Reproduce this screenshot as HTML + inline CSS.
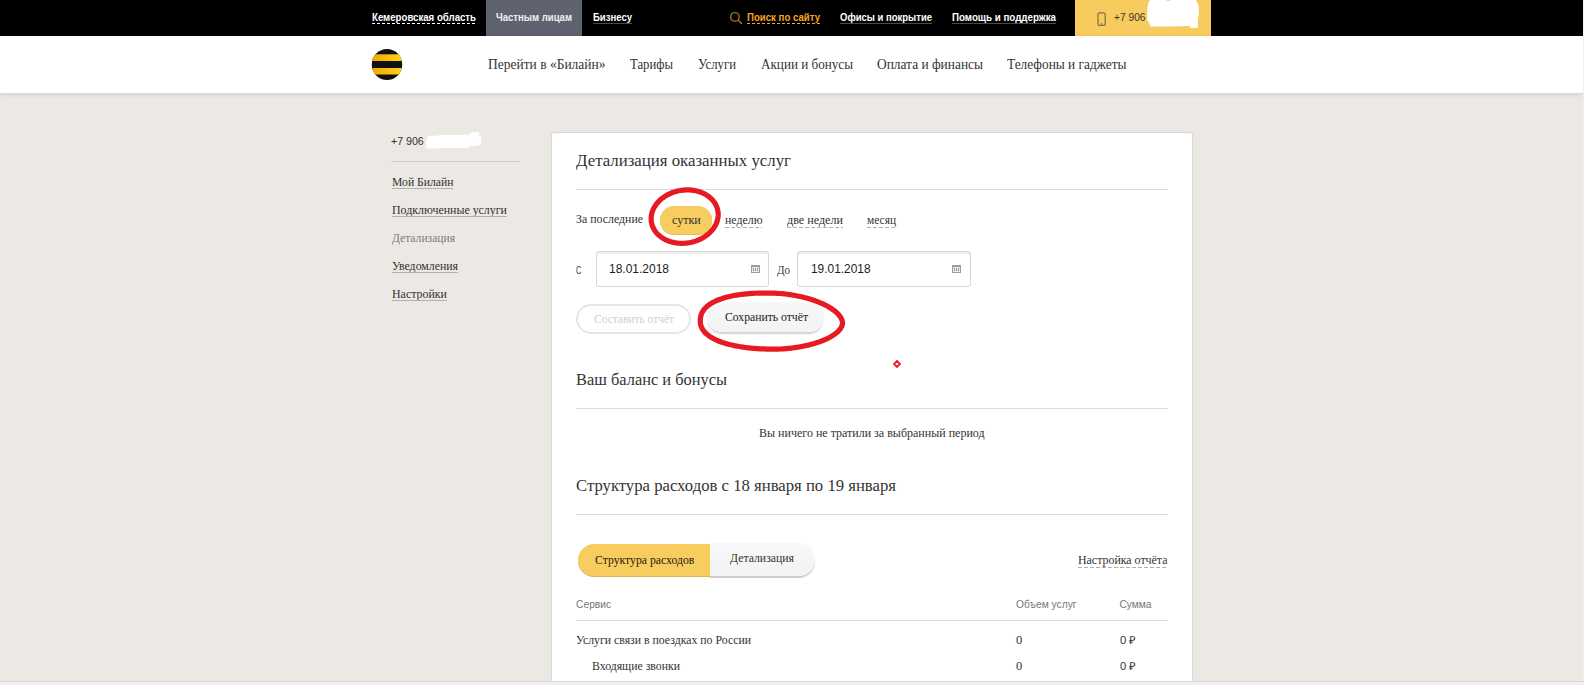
<!DOCTYPE html>
<html><head><meta charset="utf-8">
<style>
html,body{margin:0;padding:0;width:1584px;height:685px;overflow:hidden;background:#ece9e4;}
body{position:relative;font-family:"Liberation Serif",serif;color:#282828;}
.a{position:absolute;white-space:nowrap;line-height:1;transform-origin:0 0;}
.sf{}
.b{position:absolute;}
.ul{position:absolute;height:1px;}
.dash-w{background-image:linear-gradient(to right,#ffffff 3px,transparent 3px);background-size:5px 1px;}
.dash-o{background-image:linear-gradient(to right,#f5a623 3px,transparent 3px);background-size:5px 1px;}
.dash-g{background-image:linear-gradient(to right,#b0b0b0 4px,transparent 4px);background-size:6px 1px;}
.uline-d{background:#4a4a4a;}
.uline-s{background:#b3b0aa;}
.hr{position:absolute;height:1px;background:#dadada;}
.inp{position:absolute;height:34px;border:1px solid #d6d6d6;border-radius:3px;background:#fff;box-shadow:inset 0 2px 1px rgba(0,0,0,0.07);}
</style></head><body>
<!-- top bar -->
<div class="b" style="left:0;top:0;width:1583px;height:36px;background:#000;"></div>
<div class="b" style="left:486px;top:0;width:96px;height:36px;background:#5f6370;"></div>
<svg class="b" style="left:729px;top:11px" width="15" height="15" viewBox="0 0 15 15"><circle cx="5.9" cy="5.9" r="4.3" fill="none" stroke="#93701a" stroke-width="1.4"/><line x1="8.9" y1="8.9" x2="13" y2="13" stroke="#d18c16" stroke-width="1.1"/></svg>
<div class="b" style="left:1075px;top:0;width:136px;height:36px;background:#f8cb5e;"></div>
<svg class="b" style="left:1097px;top:12px" width="10" height="15" viewBox="0 0 10 15"><rect x="1" y="0.8" width="7.2" height="12.6" rx="1.4" fill="none" stroke="#7d7048" stroke-width="1.2"/><line x1="4.6" y1="10.8" x2="4.6" y2="12.8" stroke="#7d7048" stroke-width="1"/></svg>
<svg class="b" style="left:1100px;top:0" width="110" height="36" viewBox="0 0 110 36"><path d="M50.0 0.0 L66.6 0.0 L66.6 0.8 L70.4 0.8 L70.4 0.0 L96.0 0.0 L98.8 5.7 L98.8 14.2 L97.8 18.9 L97.8 27.9 L90.3 27.9 L89.8 26.0 L69.4 26.5 L50.5 26.5 L48.6 21.8 L47.2 20.4 L47.2 9.5 L48.6 1.9 Z" fill="#fff"/></svg>
<!-- header -->
<div class="b" style="left:0;top:36px;width:1583px;height:57px;background:#fff;box-shadow:0 1px 5px rgba(0,0,0,0.13);"></div>
<svg class="b" style="left:371px;top:48px" width="32" height="33" viewBox="0 0 32 33">
<defs><clipPath id="cc"><ellipse cx="16" cy="16.5" rx="15.2" ry="15.5"/></clipPath>
<linearGradient id="yg" x1="0" x2="1" y1="0" y2="0"><stop offset="0" stop-color="#f2a600"/><stop offset="1" stop-color="#ffd41c"/></linearGradient></defs>
<g clip-path="url(#cc)"><rect x="0" y="0" width="32" height="33" fill="#111"/>
<rect x="0" y="6.3" width="32" height="6.7" fill="url(#yg)"/>
<rect x="0" y="20" width="32" height="6.5" fill="url(#yg)"/></g></svg>
<!-- sidebar -->
<svg class="b" style="left:0;top:0" width="600" height="200" viewBox="0 0 600 200"><path d="M427.9 135.9 L438.8 135.7 L439 134.9 L469 134.7 L469.2 134 L471 133.2 L471 132.2 L479.2 132.2 L479.2 135.5 L481 137.2 L481 144.9 L478.1 144.9 L478.1 145.9 L469 145.9 L469 148 L438.1 148 L438.1 148.6 L426.3 148.6 L426.3 140.9 Z" fill="#fff"/></svg>
<div class="hr" style="left:391px;top:161px;width:129px;background:#d2cfca;"></div>
<!-- card -->
<div class="b" style="left:551px;top:132px;width:640px;height:600px;background:#fff;border:1px solid #d6d6d6;border-radius:3px;"></div>
<div class="hr" style="left:576px;top:189px;width:592px;"></div>
<div class="b" style="left:660px;top:206px;width:52px;height:28px;border-radius:14px;background:#f8cd5f;box-shadow:0 1px 0 #e8b955;"></div>
<div class="inp" style="left:596px;top:251px;width:171px;"></div>
<svg class="b" style="left:751px;top:265px" width="10" height="9" viewBox="0 0 10 9"><rect x="0" y="0" width="9" height="8" fill="#9c9c9c"/><rect x="1" y="2" width="7" height="5" fill="#e9e9e9"/><g fill="#9c9c9c"><rect x="2" y="3" width="1" height="3"/><rect x="4" y="3" width="1" height="3"/><rect x="6" y="3" width="1" height="3"/></g></svg>
<div class="inp" style="left:797px;top:251px;width:172px;"></div>
<svg class="b" style="left:952px;top:265px" width="10" height="9" viewBox="0 0 10 9"><rect x="0" y="0" width="9" height="8" fill="#9c9c9c"/><rect x="1" y="2" width="7" height="5" fill="#e9e9e9"/><g fill="#9c9c9c"><rect x="2" y="3" width="1" height="3"/><rect x="4" y="3" width="1" height="3"/><rect x="6" y="3" width="1" height="3"/></g></svg>
<div class="b" style="left:576px;top:304px;width:111px;height:26px;border:2px solid #e6e6e6;border-radius:15px;"></div>
<div class="b" style="left:707px;top:302px;width:117px;height:30px;border-radius:15px;background:linear-gradient(#f7f7f7,#f4f4f4);box-shadow:0 3px 2px -1px rgba(0,0,0,0.18);"></div>
<div class="hr" style="left:576px;top:408px;width:592px;"></div>
<div class="hr" style="left:576px;top:514px;width:592px;"></div>
<div class="b" style="left:710px;top:543px;width:105px;height:33px;border-radius:0 17px 17px 0;background:linear-gradient(#f8f8f8,#f3f3f3);box-shadow:0 2px 1px rgba(0,0,0,0.2);"></div>
<div class="b" style="left:578px;top:544px;width:132px;height:32px;border-radius:16px 0 0 16px;background:#f8cd5f;box-shadow:0 1px 0 #e4ac58;"></div>
<div class="hr" style="left:576px;top:620px;width:592px;"></div>
<div class="a" style="left:372px;top:13px;font-family:'Liberation Sans',sans-serif;font-weight:bold;font-size:10.0px;color:#fff;transform:scaleX(0.9638);">Кемеровская область</div>
<div class="ul dash-w" style="left:372px;top:23px;width:104px;"></div>
<div class="a" style="left:496px;top:13px;font-family:'Liberation Sans',sans-serif;font-weight:bold;font-size:10.0px;color:#f0f0f0;transform:scaleX(0.9556);">Частным лицам</div>
<div class="a" style="left:593px;top:13px;font-family:'Liberation Sans',sans-serif;font-weight:bold;font-size:10.0px;color:#fff;transform:scaleX(0.9534);">Бизнесу</div>
<div class="ul uline-d" style="left:593px;top:23px;width:39px;"></div>
<div class="a" style="left:747px;top:13px;font-family:'Liberation Sans',sans-serif;font-weight:bold;font-size:10.0px;color:#f5a623;transform:scaleX(0.9627);">Поиск по сайту</div>
<div class="ul dash-o" style="left:747px;top:23px;width:73px;"></div>
<div class="a" style="left:840px;top:13px;font-family:'Liberation Sans',sans-serif;font-weight:bold;font-size:10.0px;color:#fff;transform:scaleX(0.9495);">Офисы и покрытие</div>
<div class="ul uline-d" style="left:840px;top:23px;width:92px;"></div>
<div class="a" style="left:952px;top:13px;font-family:'Liberation Sans',sans-serif;font-weight:bold;font-size:10.0px;color:#fff;transform:scaleX(0.9744);">Помощь и поддержка</div>
<div class="ul uline-d" style="left:952px;top:23px;width:104px;"></div>
<div class="a" style="left:1113.6px;top:12px;font-family:'Liberation Sans',sans-serif;font-weight:normal;font-size:11px;color:#3a3426;transform:scaleX(0.9277);">+7 906</div>
<div class="a sf" style="left:488px;top:57px;font-family:'Liberation Serif',serif;font-weight:normal;font-size:15px;color:#333;transform:scaleX(0.8991);">Перейти в «Билайн»</div>
<div class="a sf" style="left:630px;top:57px;font-family:'Liberation Serif',serif;font-weight:normal;font-size:15px;color:#333;transform:scaleX(0.8468);">Тарифы</div>
<div class="a sf" style="left:698px;top:57px;font-family:'Liberation Serif',serif;font-weight:normal;font-size:15px;color:#333;transform:scaleX(0.8509);">Услуги</div>
<div class="a sf" style="left:761px;top:57px;font-family:'Liberation Serif',serif;font-weight:normal;font-size:15px;color:#333;transform:scaleX(0.8751);">Акции и бонусы</div>
<div class="a sf" style="left:877px;top:57px;font-family:'Liberation Serif',serif;font-weight:normal;font-size:15px;color:#333;transform:scaleX(0.8927);">Оплата и финансы</div>
<div class="a sf" style="left:1007px;top:57px;font-family:'Liberation Serif',serif;font-weight:normal;font-size:15px;color:#333;transform:scaleX(0.8896);">Телефоны и гаджеты</div>
<div class="a" style="left:391.3px;top:136px;font-family:'Liberation Sans',sans-serif;font-weight:normal;font-size:11px;color:#333;transform:scaleX(0.9631);">+7 906</div>
<div class="a sf" style="left:391.5px;top:176px;font-family:'Liberation Serif',serif;font-weight:normal;font-size:12.5px;color:#333;transform:scaleX(0.9331);">Мой Билайн</div>
<div class="ul uline-s" style="left:391.5px;top:188px;width:61.5px;"></div>
<div class="a sf" style="left:391.5px;top:204px;font-family:'Liberation Serif',serif;font-weight:normal;font-size:12.5px;color:#333;transform:scaleX(0.9516);">Подключенные услуги</div>
<div class="ul uline-s" style="left:391.5px;top:216px;width:115px;"></div>
<div class="a sf" style="left:391.5px;top:232px;font-family:'Liberation Serif',serif;font-weight:normal;font-size:12.5px;color:#7b7b7b;transform:scaleX(0.9258);">Детализация</div>
<div class="a sf" style="left:391.5px;top:260px;font-family:'Liberation Serif',serif;font-weight:normal;font-size:12.5px;color:#333;transform:scaleX(0.9448);">Уведомления</div>
<div class="ul uline-s" style="left:391.5px;top:272px;width:66px;"></div>
<div class="a sf" style="left:391.5px;top:288px;font-family:'Liberation Serif',serif;font-weight:normal;font-size:12.5px;color:#333;transform:scaleX(0.9532);">Настройки</div>
<div class="ul uline-s" style="left:391.5px;top:300px;width:55px;"></div>
<div class="a sf" style="left:576px;top:152px;font-family:'Liberation Serif',serif;font-weight:normal;font-size:17.7px;color:#333;transform:scaleX(0.9502);">Детализация оказанных услуг</div>
<div class="a sf" style="left:576px;top:213px;font-family:'Liberation Serif',serif;font-weight:normal;font-size:12.5px;color:#333;transform:scaleX(0.9483);">За последние</div>
<div class="a sf" style="left:671.8px;top:214px;font-family:'Liberation Serif',serif;font-weight:normal;font-size:12.5px;color:#333;transform:scaleX(0.9612);">сутки</div>
<div class="a sf" style="left:724.8px;top:214px;font-family:'Liberation Serif',serif;font-weight:normal;font-size:12.5px;color:#333;transform:scaleX(0.9479);">неделю</div>
<div class="ul dash-g" style="left:724.8px;top:227px;width:37.5px;"></div>
<div class="a sf" style="left:786.7px;top:214px;font-family:'Liberation Serif',serif;font-weight:normal;font-size:12.5px;color:#333;transform:scaleX(0.9692);">две недели</div>
<div class="ul dash-g" style="left:786.7px;top:227px;width:56px;"></div>
<div class="a sf" style="left:867px;top:214px;font-family:'Liberation Serif',serif;font-weight:normal;font-size:12.5px;color:#333;transform:scaleX(0.9129);">месяц</div>
<div class="ul dash-g" style="left:867px;top:227px;width:29px;"></div>
<div class="a" style="left:576px;top:265px;font-family:'Liberation Sans',sans-serif;font-weight:normal;font-size:11px;color:#333;transform:scaleX(0.6538);">С</div>
<div class="a" style="left:609px;top:263px;font-family:'Liberation Sans',sans-serif;font-weight:normal;font-size:12.2px;color:#1e1e1e;transform:scaleX(0.9836);">18.01.2018</div>
<div class="a sf" style="left:777px;top:264px;font-family:'Liberation Serif',serif;font-weight:normal;font-size:12.5px;color:#333;transform:scaleX(0.8795);">До</div>
<div class="a" style="left:811px;top:263px;font-family:'Liberation Sans',sans-serif;font-weight:normal;font-size:12.2px;color:#1e1e1e;transform:scaleX(0.9754);">19.01.2018</div>
<div class="a sf" style="left:593.5px;top:313px;font-family:'Liberation Serif',serif;font-weight:normal;font-size:12.5px;color:#cfcfcf;transform:scaleX(0.9159);">Составить отчёт</div>
<div class="a sf" style="left:724.5px;top:311px;font-family:'Liberation Serif',serif;font-weight:normal;font-size:12.5px;color:#1a1a1a;transform:scaleX(0.9342);">Сохранить отчёт</div>
<div class="a sf" style="left:576px;top:371px;font-family:'Liberation Serif',serif;font-weight:normal;font-size:17.7px;color:#333;transform:scaleX(0.9270);">Ваш баланс и бонусы</div>
<div class="a sf" style="left:758.8px;top:427px;font-family:'Liberation Serif',serif;font-weight:normal;font-size:12.5px;color:#333;transform:scaleX(0.9599);">Вы ничего не тратили за выбранный период</div>
<div class="a sf" style="left:576px;top:477px;font-family:'Liberation Serif',serif;font-weight:normal;font-size:17.7px;color:#333;transform:scaleX(0.9440);">Структура расходов с 18 января по 19 января</div>
<div class="a sf" style="left:594.9px;top:554px;font-family:'Liberation Serif',serif;font-weight:normal;font-size:12.5px;color:#262010;transform:scaleX(0.9380);">Структура расходов</div>
<div class="a sf" style="left:730.3px;top:552px;font-family:'Liberation Serif',serif;font-weight:normal;font-size:12.5px;color:#333;transform:scaleX(0.9405);">Детализация</div>
<div class="a sf" style="left:1078px;top:554px;font-family:'Liberation Serif',serif;font-weight:normal;font-size:12.5px;color:#333;transform:scaleX(0.9518);">Настройка отчёта</div>
<div class="ul dash-g" style="left:1078px;top:567px;width:89.5px;"></div>
<div class="a" style="left:575.8px;top:600px;font-family:'Liberation Sans',sans-serif;font-weight:normal;font-size:10.2px;color:#777;transform:scaleX(1.0089);">Сервис</div>
<div class="a" style="left:1016px;top:600px;font-family:'Liberation Sans',sans-serif;font-weight:normal;font-size:10.2px;color:#777;transform:scaleX(1.0079);">Объем услуг</div>
<div class="a" style="left:1119.5px;top:600px;font-family:'Liberation Sans',sans-serif;font-weight:normal;font-size:10.2px;color:#777;">Сумма</div>
<div class="a sf" style="left:576px;top:634px;font-family:'Liberation Serif',serif;font-weight:normal;font-size:12.5px;color:#333;transform:scaleX(0.9431);">Услуги связи в поездках по России</div>
<div class="a sf" style="left:1016px;top:634px;font-family:'Liberation Serif',serif;font-weight:normal;font-size:12.5px;color:#333;">0</div>
<div class="a" style="left:1119.5px;top:635px;font-family:'Liberation Sans',sans-serif;font-weight:normal;font-size:11px;color:#333;transform:scaleX(1.0206);">0 ₽</div>
<div class="a sf" style="left:592px;top:660px;font-family:'Liberation Serif',serif;font-weight:normal;font-size:12.5px;color:#333;transform:scaleX(0.9423);">Входящие звонки</div>
<div class="a sf" style="left:1016px;top:660px;font-family:'Liberation Serif',serif;font-weight:normal;font-size:12.5px;color:#333;">0</div>
<div class="a" style="left:1119.5px;top:661px;font-family:'Liberation Sans',sans-serif;font-weight:normal;font-size:11px;color:#333;transform:scaleX(1.0206);">0 ₽</div>
<!-- annotations -->
<svg class="b" style="left:0;top:0" width="1584" height="685" viewBox="0 0 1584 685"><path d="M717.89,210.97 L718.03,212.00 L718.13,213.04 L718.18,214.08 L718.17,215.13 L718.11,216.17 L718.00,217.22 L717.84,218.27 L717.63,219.32 L717.36,220.36 L717.05,221.39 L716.69,222.42 L716.27,223.44 L715.81,224.45 L715.30,225.44 L714.75,226.42 L714.14,227.39 L713.49,228.34 L712.80,229.27 L712.06,230.19 L711.28,231.08 L710.46,231.95 L709.60,232.79 L708.71,233.62 L707.77,234.41 L706.80,235.18 L705.79,235.92 L704.76,236.63 L703.69,237.30 L702.59,237.95 L701.46,238.56 L700.31,239.14 L699.14,239.69 L697.94,240.20 L696.72,240.67 L695.48,241.11 L694.23,241.50 L692.96,241.86 L691.68,242.18 L690.39,242.47 L689.09,242.71 L687.78,242.91 L686.47,243.07 L685.15,243.19 L683.83,243.27 L682.52,243.31 L681.21,243.30 L679.90,243.26 L678.60,243.17 L677.31,243.04 L676.03,242.88 L674.77,242.67 L673.52,242.42 L672.29,242.13 L671.07,241.81 L669.88,241.44 L668.71,241.04 L667.57,240.59 L666.45,240.11 L665.36,239.60 L664.30,239.05 L663.27,238.46 L662.27,237.84 L661.31,237.19 L660.38,236.51 L659.49,235.79 L658.64,235.05 L657.83,234.28 L657.07,233.48 L656.34,232.65 L655.66,231.80 L655.02,230.93 L654.43,230.03 L653.88,229.12 L653.39,228.18 L652.94,227.23 L652.54,226.26 L652.18,225.27 L651.88,224.28 L651.63,223.27 L651.43,222.25 L651.29,221.22 L651.19,220.18 L651.14,219.14 L651.15,218.09 L651.21,217.05 L651.32,216.00 L651.48,214.95 L651.69,213.90 L651.96,212.86 L652.27,211.83 L652.63,210.80 L653.05,209.78 L653.51,208.77 L654.02,207.78 L654.57,206.80 L655.18,205.83 L655.83,204.88 L656.52,203.95 L657.26,203.03 L658.04,202.14 L658.86,201.27 L659.72,200.43 L660.61,199.60 L661.55,198.81 L662.52,198.04 L663.53,197.30 L664.56,196.59 L665.63,195.92 L666.73,195.27 L667.86,194.66 L669.01,194.08 L670.18,193.53 L671.38,193.02 L672.60,192.55 L673.84,192.11 L675.09,191.72 L676.36,191.36 L677.64,191.04 L678.93,190.75 L680.23,190.51 L681.54,190.31 L682.85,190.15 L684.17,190.03 L685.49,189.95 L686.80,189.91 L688.11,189.92 L689.42,189.96 L690.72,190.05 L692.01,190.18 L693.29,190.34 L694.55,190.55 L695.80,190.80 L697.03,191.09 L698.25,191.41 L699.44,191.78 L700.61,192.18 L701.75,192.63 L702.87,193.11 L703.96,193.62 L705.02,194.17 L706.05,194.76 L707.05,195.38 L708.01,196.03 L708.94,196.71 L709.83,197.43 L710.68,198.17 L711.49,198.94 L712.25,199.74 L712.98,200.57 L713.66,201.42 L714.30,202.29 L714.89,203.19 L715.44,204.10 L715.93,205.04 L716.38,205.99 L716.78,206.96 L717.14,207.95 L717.44,208.94 L717.69,209.95 Z" fill="none" stroke="#e51a23" stroke-width="5.2" stroke-linejoin="round"/><path d="M842.55,323.18 L842.47,324.01 L842.28,324.93 L841.96,325.88 L841.53,326.85 L840.99,327.84 L840.33,328.82 L839.55,329.82 L838.67,330.81 L837.67,331.79 L836.56,332.77 L835.35,333.73 L834.03,334.68 L832.62,335.62 L831.10,336.54 L829.49,337.44 L827.78,338.32 L825.99,339.17 L824.11,340.00 L822.15,340.80 L820.11,341.58 L818.00,342.32 L815.82,343.03 L813.57,343.71 L811.26,344.35 L808.90,344.96 L806.49,345.53 L804.03,346.06 L801.53,346.56 L799.00,347.01 L796.44,347.42 L793.87,347.79 L791.27,348.12 L788.67,348.40 L786.07,348.64 L783.48,348.84 L780.92,348.99 L778.39,349.10 L775.92,349.17 L773.54,349.19 L771.41,349.17 L767.12,349.06 L763.58,348.94 L760.28,348.78 L757.14,348.59 L754.12,348.36 L751.20,348.10 L748.38,347.81 L745.63,347.48 L742.96,347.12 L740.37,346.72 L737.85,346.29 L735.41,345.83 L733.04,345.33 L730.74,344.81 L728.52,344.25 L726.37,343.65 L724.30,343.03 L722.30,342.38 L720.39,341.69 L718.55,340.98 L716.79,340.24 L715.12,339.46 L713.53,338.67 L712.03,337.84 L710.61,336.98 L709.28,336.10 L708.03,335.20 L706.88,334.26 L705.81,333.30 L704.84,332.32 L703.96,331.31 L703.18,330.27 L702.48,329.20 L701.88,328.10 L701.38,326.98 L700.97,325.81 L700.66,324.60 L700.45,323.34 L700.33,321.98 L700.31,320.34 L700.40,318.62 L700.57,317.21 L700.83,315.89 L701.20,314.65 L701.65,313.45 L702.20,312.29 L702.84,311.17 L703.58,310.08 L704.41,309.03 L705.33,308.01 L706.34,307.02 L707.44,306.06 L708.63,305.13 L709.91,304.23 L711.28,303.37 L712.73,302.53 L714.27,301.73 L715.89,300.96 L717.59,300.22 L719.38,299.52 L721.24,298.85 L723.19,298.21 L725.21,297.61 L727.30,297.04 L729.47,296.51 L731.72,296.02 L734.03,295.56 L736.42,295.14 L738.88,294.75 L741.42,294.41 L744.02,294.10 L746.70,293.83 L749.46,293.60 L752.30,293.41 L755.22,293.26 L758.25,293.15 L761.39,293.07 L764.70,293.04 L768.24,293.06 L772.53,293.12 L774.66,293.19 L777.04,293.31 L779.50,293.48 L782.02,293.70 L784.58,293.96 L787.16,294.27 L789.75,294.63 L792.33,295.03 L794.91,295.48 L797.47,295.97 L800.01,296.51 L802.52,297.09 L805.00,297.70 L807.43,298.36 L809.82,299.05 L812.16,299.79 L814.43,300.55 L816.65,301.35 L818.80,302.18 L820.88,303.05 L822.89,303.94 L824.81,304.86 L826.66,305.80 L828.42,306.77 L830.08,307.75 L831.66,308.76 L833.13,309.78 L834.51,310.82 L835.79,311.87 L836.96,312.93 L838.02,313.99 L838.98,315.06 L839.83,316.13 L840.56,317.20 L841.18,318.26 L841.68,319.31 L842.07,320.34 L842.35,321.35 L842.51,322.32 Z" fill="none" stroke="#e51a23" stroke-width="5.2" stroke-linejoin="round"/></svg>
<svg class="b" style="left:893px;top:360px" width="8" height="8" viewBox="0 0 8 8"><path d="M4 1 L7 4 L4 7 L1 4 Z" fill="none" stroke="#ee1c25" stroke-width="1.8"/></svg>
<!-- bottom strip & right edge -->
<div class="b" style="left:0;top:681px;width:1584px;height:1px;background:#d6d6d6;"></div>
<div class="b" style="left:0;top:682px;width:1584px;height:3px;background:#f0f0f0;"></div>
<div class="b" style="left:1583px;top:0;width:1px;height:681px;background:#efefef;"></div>
</body></html>
